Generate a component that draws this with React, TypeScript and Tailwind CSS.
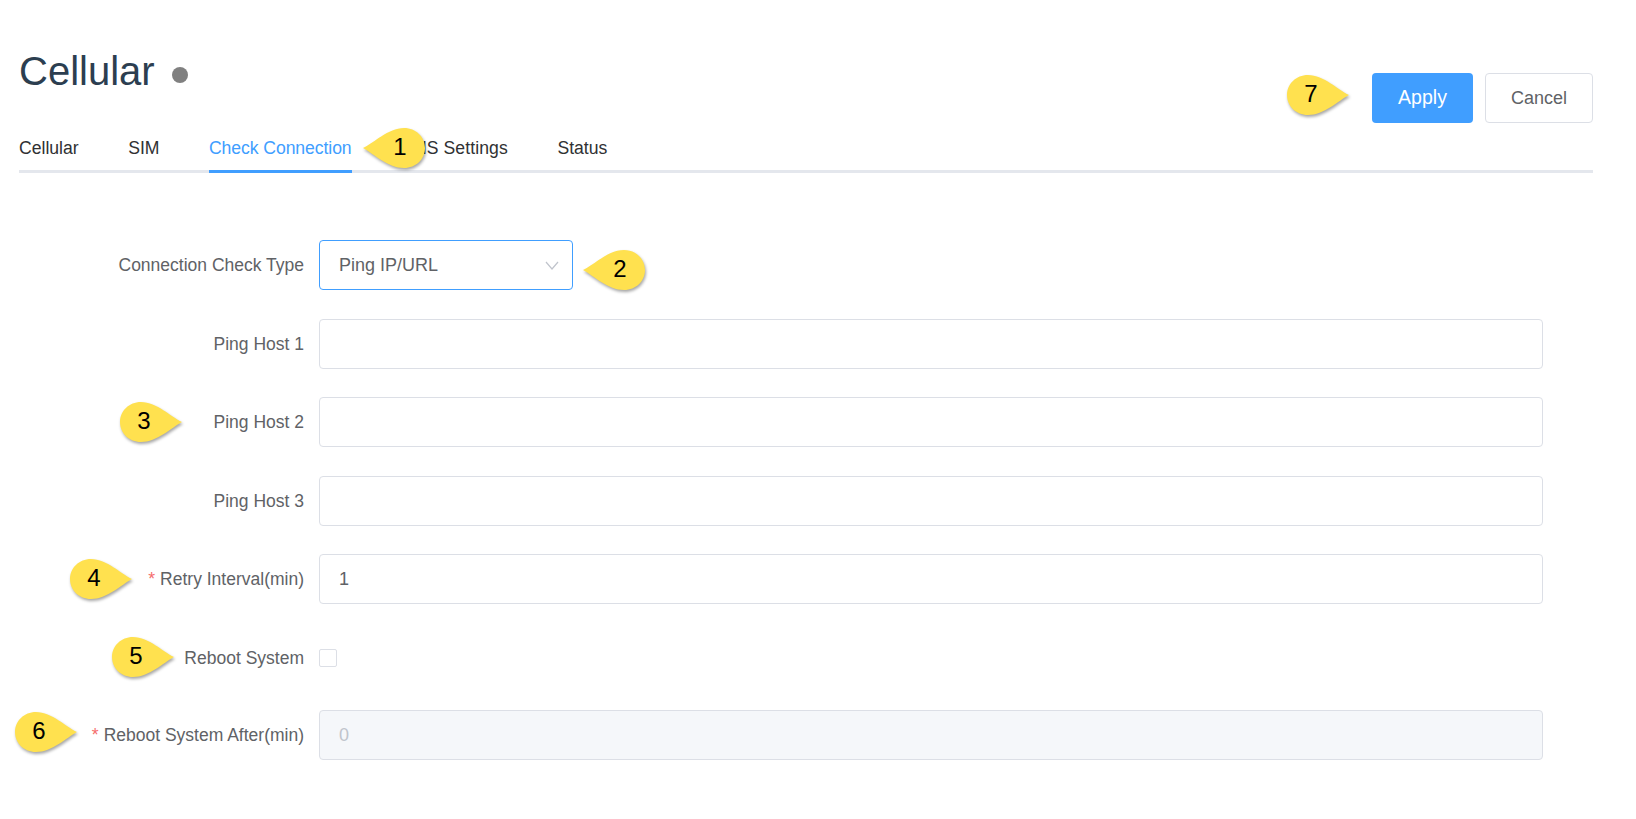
import React from "react";

const FONT = "font-['Liberation_Sans',Arial,sans-serif]";

function Callout({ n, left, top, flip = false }: { n: number; left: number; top: number; flip?: boolean }) {
  return (
    <div className="absolute w-[64px] h-[42px]" style={{ left, top }}>
      <svg viewBox="0 0 64 42" className="w-[64px] h-[42px] overflow-visible drop-shadow-[1px_2px_1.5px_rgba(0,0,0,0.35)]">
        <path
          d="M63 21C52 16 38 1 22 1 10 1 1 10 1 21s9 20 21 20c16 0 30-14 41-20Z"
          fill="#FFE14F"
          transform={flip ? "translate(64 0) scale(-1 1)" : undefined}
        />
      </svg>
      <span
        className={`absolute h-[30px] leading-[30px] w-[30px] text-center text-[24px] text-black ${flip ? "left-[23px] top-[5px]" : "left-[10px] top-[5px]"}`}
      >
        {n}
      </span>
    </div>
  );
}

function Row({ label, required, last, children }: { label: string; required?: boolean; last?: boolean; children: React.ReactNode }) {
  return (
    <div className={`flex items-center h-[50px] gap-[15px] ${last ? "-mt-[1px]" : ""}`}>
      <label className="w-[285px] pt-[1px] text-right text-[17.5px] text-[#606266] whitespace-nowrap">
        {required && <span className="text-[#F56C6C] mr-[5px]">*</span>}
        {label}
      </label>
      <div className="flex-1">{children}</div>
    </div>
  );
}

function TextInput({ value = "", disabled = false }: { value?: string; disabled?: boolean }) {
  return (
    <input
      readOnly
      disabled={disabled}
      value={value}
      className={`block w-full h-[50px] rounded-[4px] border border-[#DCDFE6] px-[19px] text-[18px] outline-none ${
        disabled ? "bg-[#F5F7FA] text-[#C0C4CC]" : "bg-white text-[#606266]"
      }`}
    />
  );
}

export default function App() {
  return (
    <div className={`relative w-[1636px] h-[819px] bg-white overflow-hidden pl-[19px] pr-[43px] ${FONT}`}>
      <header className="flex justify-between items-start pt-[44px] h-[123px]">
        <div className="flex items-center h-[54px]">
          <h1 className="text-[40px] leading-[54px] text-[#2C3E50] font-normal">Cellular</h1>
          <span className="ml-[17px] mt-[8px] w-[16px] h-[16px] rounded-full bg-[#808080]" />
        </div>
        <div className="flex gap-[12px] mt-[29px]">
          <button className="w-[101px] h-[50px] rounded-[4px] bg-[#409EFF] text-white text-[19.5px]">Apply</button>
          <button className="w-[108px] h-[50px] rounded-[4px] border border-[#DCDFE6] bg-white text-[#606266] text-[18px]">
            Cancel
          </button>
        </div>
      </header>

      <nav className="flex gap-[49.5px] h-[50px] border-b-[3px] border-[#E4E7ED] text-[17.6px] text-[#303133]">
        <a className="h-[50px] pt-[12px] leading-[27px] border-b-[3px] border-transparent">Cellular</a>
        <a className="h-[50px] pt-[12px] leading-[27px] border-b-[3px] border-transparent">SIM</a>
        <a className="h-[50px] pt-[12px] leading-[27px] border-b-[3px] border-[#409EFF] text-[#409EFF] tracking-[-0.07px]">
          Check Connection
        </a>
        <a className="h-[50px] pt-[12px] leading-[27px] border-b-[3px] border-transparent tracking-[0.1px]">DNS Settings</a>
        <a className="h-[50px] pt-[12px] leading-[27px] border-b-[3px] border-transparent">Status</a>
      </nav>

      <form className="mt-[67px] pr-[50px] flex flex-col gap-[28.5px]">
        <Row label="Connection Check Type">
          <div className="flex items-center justify-between w-[254px] h-[50px] rounded-[4px] border border-[#409EFF] pl-[19px] pr-[13px] text-[18px] text-[#606266]">
            <span>Ping IP/URL</span>
            <svg viewBox="0 0 14 9" className="w-[14px] h-[9px]" fill="none" stroke="#C0C4CC" strokeWidth="1.2">
              <path d="M1 1l6 7 6-7" />
            </svg>
          </div>
        </Row>
        <Row label="Ping Host 1"><TextInput /></Row>
        <Row label="Ping Host 2"><TextInput /></Row>
        <Row label="Ping Host 3"><TextInput /></Row>
        <Row label="Retry Interval(min)" required><TextInput value="1" /></Row>
        <Row label="Reboot System">
          <div className="w-[18px] h-[18px] rounded-[2px] border border-[#DCDFE6] bg-white" />
        </Row>
        <Row label="Reboot System After(min)" required last><TextInput value="0" disabled /></Row>
      </form>

      <Callout n={1} left={362} top={127} flip />
      <Callout n={2} left={582} top={249} flip />
      <Callout n={3} left={119} top={401} />
      <Callout n={4} left={69} top={558} />
      <Callout n={5} left={111} top={636} />
      <Callout n={6} left={14} top={711} />
      <Callout n={7} left={1286} top={74} />
    </div>
  );
}
